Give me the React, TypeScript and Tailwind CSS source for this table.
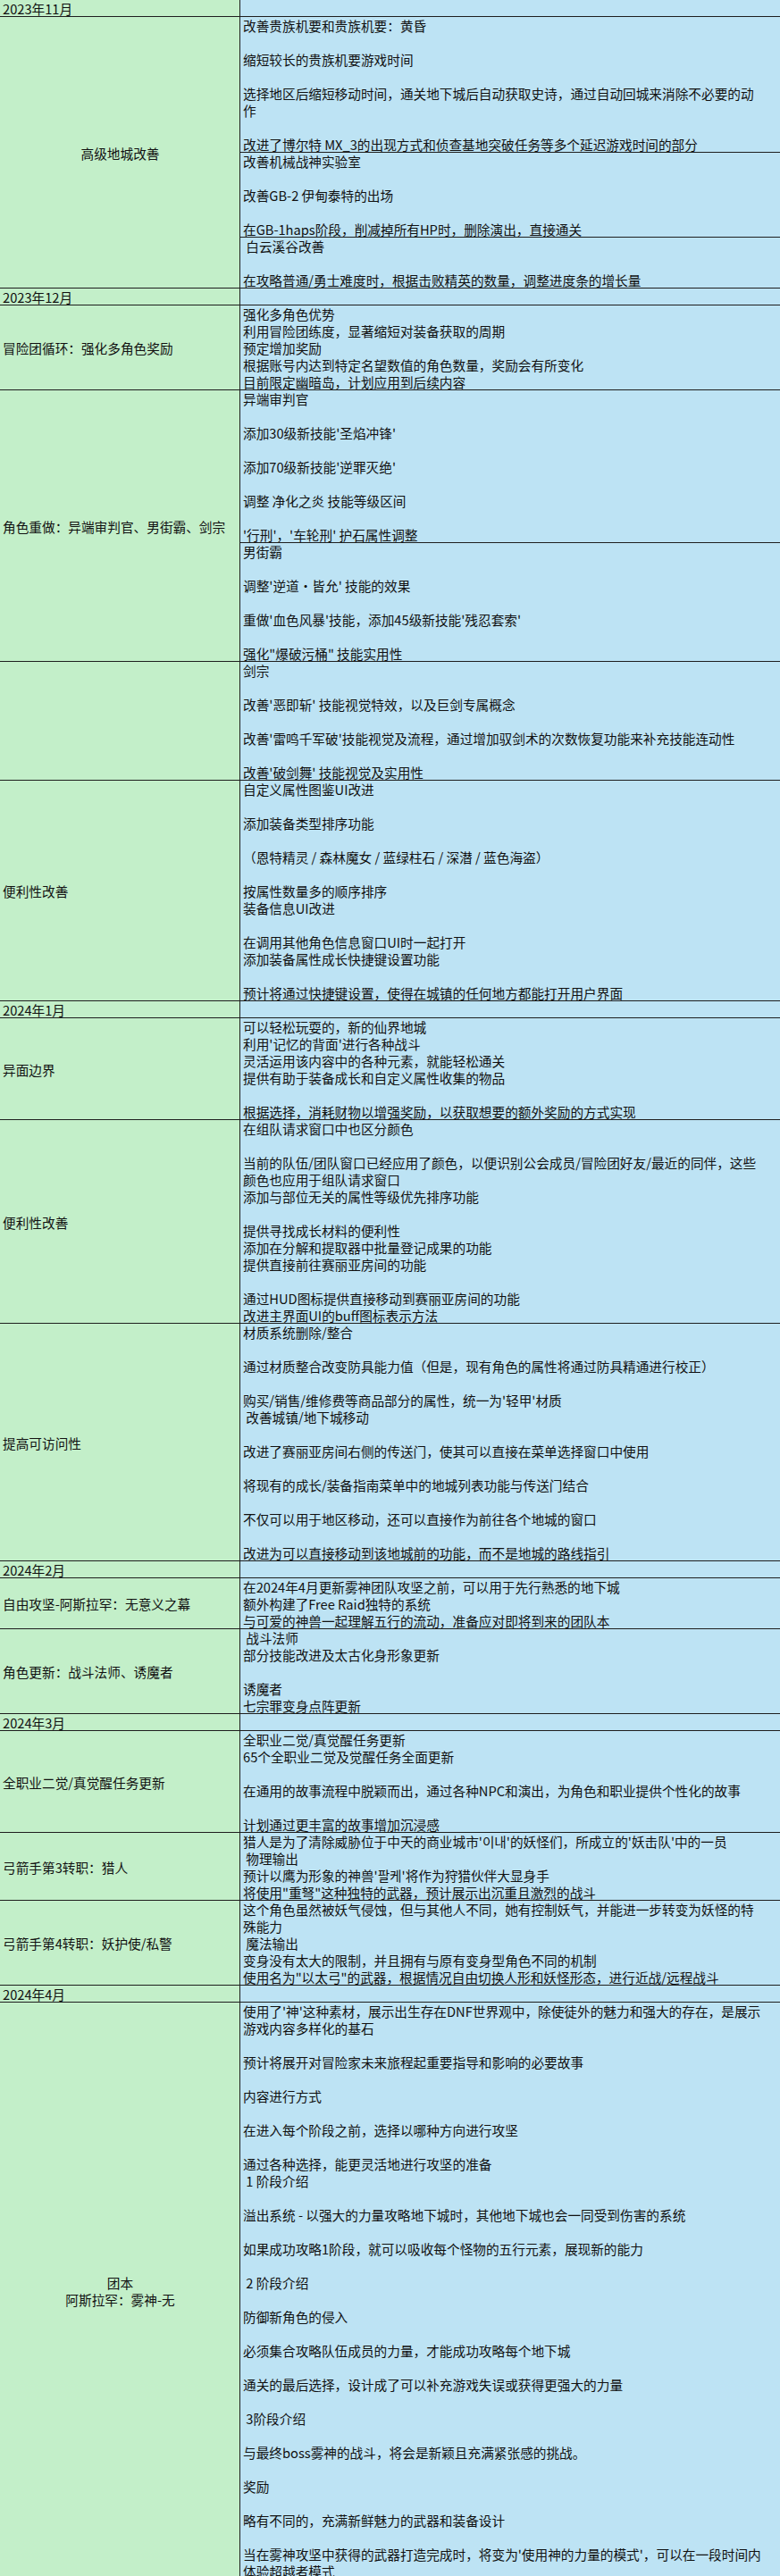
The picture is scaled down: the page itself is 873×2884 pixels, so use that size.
import React from "react";

type Header = { kind: "h"; label: string };
type Group = { kind: "g"; label: string[]; center?: boolean; subs: string[][] };
type Row = Header | Group;

const rows: Row[] = [
  { kind: "h", label: "2023年11月" },
  {
    kind: "g",
    label: ["高级地城改善"],
    center: true,
    subs: [
      [
        "改善贵族机要和贵族机要：黄昏",
        "",
        "缩短较长的贵族机要游戏时间",
        "",
        "选择地区后缩短移动时间，通关地下城后自动获取史诗，通过自动回城来消除不必要的动",
        "作",
        "",
        "改进了博尔特 MX_3的出现方式和侦查基地突破任务等多个延迟游戏时间的部分",
      ],
      ["改善机械战神实验室", "", "改善GB-2 伊甸泰特的出场", "", "在GB-1haps阶段，削减掉所有HP时，删除演出，直接通关"],
      [" 白云溪谷改善", "", "在攻略普通/勇士难度时，根据击败精英的数量，调整进度条的增长量"],
    ],
  },
  { kind: "h", label: "2023年12月" },
  {
    kind: "g",
    label: ["冒险团循环：强化多角色奖励"],
    subs: [
      [
        "强化多角色优势",
        "利用冒险团练度，显著缩短对装备获取的周期",
        "预定增加奖励",
        "根据账号内达到特定名望数值的角色数量，奖励会有所变化",
        "目前限定幽暗岛，计划应用到后续内容",
      ],
    ],
  },
  {
    kind: "g",
    label: ["角色重做：异端审判官、男街霸、剑宗"],
    subs: [
      [
        "异端审判官",
        "",
        "添加30级新技能'圣焰冲锋'",
        "",
        "添加70级新技能'逆罪灭绝'",
        "",
        "调整 净化之炎 技能等级区间",
        "",
        "'行刑'，'车轮刑' 护石属性调整",
      ],
      [
        "男街霸",
        "",
        "调整'逆道·皆允' 技能的效果",
        "",
        "重做'血色风暴'技能，添加45级新技能'残忍套索'",
        "",
        "强化\"爆破污桶\" 技能实用性",
      ],
    ],
  },
  {
    kind: "g",
    label: [],
    subs: [
      [
        "剑宗",
        "",
        "改善'恶即斩' 技能视觉特效，以及巨剑专属概念",
        "",
        "改善'雷鸣千军破'技能视觉及流程，通过增加驭剑术的次数恢复功能来补充技能连动性",
        "",
        "改善'破剑舞' 技能视觉及实用性",
      ],
    ],
  },
  {
    kind: "g",
    label: ["便利性改善"],
    subs: [
      [
        "自定义属性图鉴UI改进",
        "",
        "添加装备类型排序功能",
        "",
        "（恩特精灵 / 森林魔女 / 蓝绿柱石 / 深潜 / 蓝色海盗）",
        "",
        "按属性数量多的顺序排序",
        "装备信息UI改进",
        "",
        "在调用其他角色信息窗口UI时一起打开",
        "添加装备属性成长快捷键设置功能",
        "",
        "预计将通过快捷键设置，使得在城镇的任何地方都能打开用户界面",
      ],
    ],
  },
  { kind: "h", label: "2024年1月" },
  {
    kind: "g",
    label: ["异面边界"],
    subs: [
      [
        "可以轻松玩耍的，新的仙界地城",
        "利用'记忆的背面'进行各种战斗",
        "灵活运用该内容中的各种元素，就能轻松通关",
        "提供有助于装备成长和自定义属性收集的物品",
        "",
        "根据选择，消耗财物以增强奖励，以获取想要的额外奖励的方式实现",
      ],
    ],
  },
  {
    kind: "g",
    label: ["便利性改善"],
    subs: [
      [
        "在组队请求窗口中也区分颜色",
        "",
        "当前的队伍/团队窗口已经应用了颜色，以便识别公会成员/冒险团好友/最近的同伴，这些",
        "颜色也应用于组队请求窗口",
        "添加与部位无关的属性等级优先排序功能",
        "",
        "提供寻找成长材料的便利性",
        "添加在分解和提取器中批量登记成果的功能",
        "提供直接前往赛丽亚房间的功能",
        "",
        "通过HUD图标提供直接移动到赛丽亚房间的功能",
        "改进主界面UI的buff图标表示方法",
      ],
    ],
  },
  {
    kind: "g",
    label: ["提高可访问性"],
    subs: [
      [
        "材质系统删除/整合",
        "",
        "通过材质整合改变防具能力值（但是，现有角色的属性将通过防具精通进行校正）",
        "",
        "购买/销售/维修费等商品部分的属性，统一为'轻甲'材质",
        " 改善城镇/地下城移动",
        "",
        "改进了赛丽亚房间右侧的传送门，使其可以直接在菜单选择窗口中使用",
        "",
        "将现有的成长/装备指南菜单中的地城列表功能与传送门结合",
        "",
        "不仅可以用于地区移动，还可以直接作为前往各个地城的窗口",
        "",
        "改进为可以直接移动到该地城前的功能，而不是地城的路线指引",
      ],
    ],
  },
  { kind: "h", label: "2024年2月" },
  {
    kind: "g",
    label: ["自由攻坚-阿斯拉罕：无意义之幕"],
    subs: [
      [
        "在2024年4月更新雾神团队攻坚之前，可以用于先行熟悉的地下城",
        "额外构建了Free Raid独特的系统",
        "与可爱的神兽一起理解五行的流动，准备应对即将到来的团队本",
      ],
    ],
  },
  {
    kind: "g",
    label: ["角色更新：战斗法师、诱魔者"],
    subs: [[" 战斗法师", "部分技能改进及太古化身形象更新", "", "诱魔者", "七宗罪变身点阵更新"]],
  },
  { kind: "h", label: "2024年3月" },
  {
    kind: "g",
    label: ["全职业二觉/真觉醒任务更新"],
    subs: [
      [
        "全职业二觉/真觉醒任务更新",
        "65个全职业二觉及觉醒任务全面更新",
        "",
        "在通用的故事流程中脱颖而出，通过各种NPC和演出，为角色和职业提供个性化的故事",
        "",
        "计划通过更丰富的故事增加沉浸感",
      ],
    ],
  },
  {
    kind: "g",
    label: ["弓箭手第3转职：猎人"],
    subs: [
      [
        "猎人是为了清除威胁位于中天的商业城市'이내'的妖怪们，所成立的'妖击队'中的一员",
        " 物理输出",
        "预计以鹰为形象的神兽'팔케'将作为狩猎伙伴大显身手",
        "将使用\"重弩\"这种独特的武器，预计展示出沉重且激烈的战斗",
      ],
    ],
  },
  {
    kind: "g",
    label: ["弓箭手第4转职：妖护使/私警"],
    subs: [
      [
        "这个角色虽然被妖气侵蚀，但与其他人不同，她有控制妖气，并能进一步转变为妖怪的特",
        "殊能力",
        " 魔法输出",
        "变身没有太大的限制，并且拥有与原有变身型角色不同的机制",
        "使用名为\"以太弓\"的武器，根据情况自由切换人形和妖怪形态，进行近战/远程战斗",
      ],
    ],
  },
  { kind: "h", label: "2024年4月" },
  {
    kind: "g",
    label: ["团本", "阿斯拉罕：雾神-无"],
    center: true,
    subs: [
      [
        "使用了'神'这种素材，展示出生存在DNF世界观中，除使徒外的魅力和强大的存在，是展示",
        "游戏内容多样化的基石",
        "",
        "预计将展开对冒险家未来旅程起重要指导和影响的必要故事",
        "",
        "内容进行方式",
        "",
        "在进入每个阶段之前，选择以哪种方向进行攻坚",
        "",
        "通过各种选择，能更灵活地进行攻坚的准备",
        " 1 阶段介绍",
        "",
        "溢出系统 - 以强大的力量攻略地下城时，其他地下城也会一同受到伤害的系统",
        "",
        "如果成功攻略1阶段，就可以吸收每个怪物的五行元素，展现新的能力",
        "",
        " 2 阶段介绍",
        "",
        "防御新角色的侵入",
        "",
        "必须集合攻略队伍成员的力量，才能成功攻略每个地下城",
        "",
        "通关的最后选择，设计成了可以补充游戏失误或获得更强大的力量",
        "",
        " 3阶段介绍",
        "",
        "与最终boss雾神的战斗，将会是新颖且充满紧张感的挑战。",
        "",
        "奖励",
        "",
        "略有不同的，充满新鲜魅力的武器和装备设计",
        "",
        "当在雾神攻坚中获得的武器打造完成时，将变为'使用神的力量的模式'，可以在一段时间内",
        "体验超越者模式",
      ],
    ],
  },
];

function Line({ text }: { text: string }) {
  return <div className="h-[19px] leading-[19px] whitespace-pre">{text}</div>;
}

function HeaderRow({ label }: { label: string }) {
  return (
    <div className="flex">
      <div className="w-[269px] shrink-0 bg-[#c3efc9] px-[3px] h-[19px] leading-[19px] whitespace-pre shadow-[inset_-1px_-1px_0_#1e1e1e]">
        {label}
      </div>
      <div className="flex-1 h-[19px] bg-[#bde3f4] shadow-[inset_0_-1px_0_#1e1e1e]" />
    </div>
  );
}

function GroupRow({ g }: { g: Group }) {
  return (
    <div className="flex">
      <div
        className={
          g.center
            ? "w-[269px] shrink-0 bg-[#c3efc9] px-[3px] flex items-center justify-center text-center shadow-[inset_-1px_-1px_0_#1e1e1e]"
            : "w-[269px] shrink-0 bg-[#c3efc9] px-[3px] flex items-center shadow-[inset_-1px_-1px_0_#1e1e1e]"
        }
      >
        <div>
          {g.label.map((l, i) => (
            <div key={i} className="leading-[19px] whitespace-pre">
              {l}
            </div>
          ))}
        </div>
      </div>
      <div className="flex-1 min-w-0 flex flex-col overflow-hidden">
        {g.subs.map((s, i) => (
          <div key={i} className="bg-[#bde3f4] pl-[3px] shadow-[inset_0_-1px_0_#1e1e1e]">
            {s.map((t, j) => (
              <Line key={j} text={t} />
            ))}
          </div>
        ))}
      </div>
    </div>
  );
}

export default function App() {
  return (
    <div className="w-[873px] bg-white text-[14.67px] text-[#111] font-['Noto_Sans_CJK_SC','Noto_Sans_CJK_KR',sans-serif]">
      {rows.map((r, i) =>
        r.kind === "h" ? <HeaderRow key={i} label={r.label} /> : <GroupRow key={i} g={r} />
      )}
    </div>
  );
}
